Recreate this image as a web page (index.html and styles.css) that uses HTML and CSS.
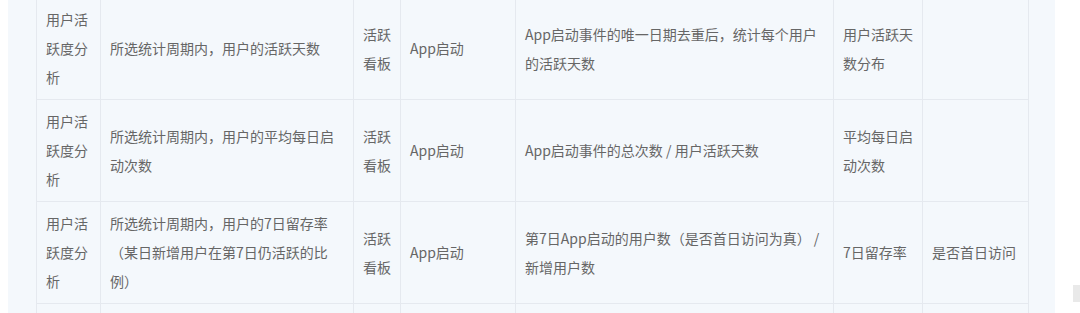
FILE: index.html
```html
<!DOCTYPE html>
<html lang="zh-CN">
<head>
<meta charset="utf-8">
<link rel="stylesheet" href="styles.css">
</head>
<body>
<div class="panel">
  <table class="metrics">
    <colgroup>
      <col class="c1"><col class="c2"><col class="c3"><col class="c4"><col class="c5"><col class="c6"><col class="c7">
    </colgroup>
    <tbody>
      <tr>
        <td>用户活跃度分析</td>
        <td>所选统计周期内，用户的活跃天数</td>
        <td>活跃看板</td>
        <td>App启动</td>
        <td>App启动事件的唯一日期去重后，统计每个用户的活跃天数</td>
        <td>用户活跃天数分布</td>
        <td></td>
      </tr>
      <tr>
        <td>用户活跃度分析</td>
        <td>所选统计周期内，用户的平均每日启动次数</td>
        <td>活跃看板</td>
        <td>App启动</td>
        <td>App启动事件的总次数 / 用户活跃天数</td>
        <td>平均每日启动次数</td>
        <td></td>
      </tr>
      <tr>
        <td>用户活跃度分析</td>
        <td>所选统计周期内，用户的7日留存率（某日新增用户在第7日仍活跃的比例）</td>
        <td>活跃看板</td>
        <td>App启动</td>
        <td>第7日App启动的用户数（是否首日访问为真） / 新增用户数</td>
        <td>7日留存率</td>
        <td>是否首日访问</td>
      </tr>
      <tr class="tail">
        <td></td><td></td><td></td><td></td><td></td><td></td><td></td>
      </tr>
    </tbody>
  </table>
</div>
<div class="thumb"></div>
</body>
</html>
```
FILE: styles.css
```css
html, body {
  margin: 0;
  padding: 0;
  background: #ffffff;
  overflow: hidden;
}
body {
  width: 1080px;
  height: 313px;
  position: relative;
  font-family: "Noto Sans CJK SC", "Noto Sans", sans-serif;
}
.panel {
  margin-left: 8px;
  width: 1047px;
  height: 313px;
  background: #f4f8fc;
  overflow: hidden;
}
.metrics {
  margin-top: -3px;
  margin-left: 28px;
  width: 992px;
  border-collapse: collapse;
  table-layout: fixed;
  font-size: 14px;
  line-height: 29px;
  color: #666666;
}
.metrics td {
  border: 1px solid #e5e9ef;
  padding: 7px 8px 7px 9px;
  vertical-align: middle;
  height: 87px;
  word-break: break-all;
}
.c1 { width: 64px; }
.c2 { width: 253px; }
.c3 { width: 47px; }
.c4 { width: 115px; }
.c5 { width: 318px; }
.c6 { width: 89px; }
.c7 { width: 106px; }
.tail td { height: 40px; }
.thumb {
  position: absolute;
  left: 1073px;
  top: 285px;
  width: 7px;
  height: 17px;
  background: #e9e9e9;
}
```
